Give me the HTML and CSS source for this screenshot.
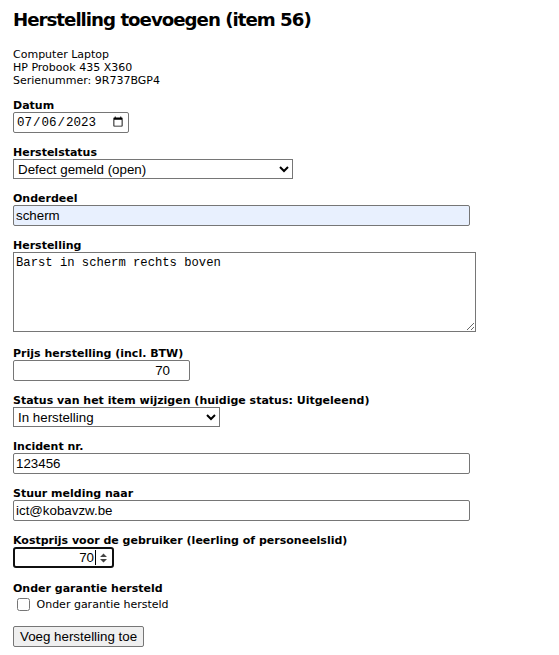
FILE: index.html
```html
<!DOCTYPE html>
<html lang="nl">
<head>
<meta charset="utf-8">
<title>Herstelling toevoegen</title>
<link rel="stylesheet" href="styles.css">
</head>
<body>
<div class="page">
  <h1 class="title">Herstelling toevoegen (item 56)</h1>
  <p class="info">Computer Laptop<br>HP Probook 435 X360<br>Serienummer: 9R737BGP4</p>
  <form class="form">
    <div class="field">
      <label class="lbl" for="datum">Datum</label>
      <input class="ctl date" id="datum" type="date" value="2023-07-06">
    </div>
    <div class="field">
      <label class="lbl" for="hs">Herstelstatus</label>
      <select class="ctl sel sel-wide" id="hs"><option>Defect gemeld (open)</option></select>
    </div>
    <div class="field">
      <label class="lbl" for="od">Onderdeel</label>
      <input class="ctl txt wide autofill" id="od" type="text" value="scherm">
    </div>
    <div class="field field-area">
      <label class="lbl" for="hst">Herstelling</label>
      <textarea class="area" id="hst">Barst in scherm rechts boven</textarea>
    </div>
    <div class="field">
      <label class="lbl" for="pr">Prijs herstelling (incl. BTW)</label>
      <input class="ctl txt price" id="pr" type="text" value="70">
    </div>
    <div class="field">
      <label class="lbl" for="st">Status van het item wijzigen (huidige status: Uitgeleend)</label>
      <select class="ctl sel sel-mid" id="st"><option>In herstelling</option></select>
    </div>
    <div class="field">
      <label class="lbl" for="inc">Incident nr.</label>
      <input class="ctl txt wide" id="inc" type="text" value="123456">
    </div>
    <div class="field">
      <label class="lbl" for="mail">Stuur melding naar</label>
      <input class="ctl txt wide" id="mail" type="text" value="ict@kobavzw.be">
    </div>
    <div class="field field-num">
      <span class="lbl">Kostprijs voor de gebruiker (leerling of personeelslid)</span>
      <div class="num">
        <span class="num-val">70</span><span class="caret"></span>
        <svg class="spin" width="9" height="12" viewBox="0 0 9 12"><path d="M4.5 1.5 L8 5 H1 Z M4.5 10.5 L8 7 H1 Z" fill="#444"/></svg>
      </div>
    </div>
    <div class="field field-check">
      <span class="lbl">Onder garantie hersteld</span>
      <label class="check"><input class="cb" type="checkbox"> Onder garantie hersteld</label>
    </div>
    <div class="actions">
      <button class="btn" type="button">Voeg herstelling toe</button>
    </div>
  </form>
</div>
</body>
</html>
```
FILE: styles.css
```css
html, body {
  margin: 0;
  padding: 0;
  background: #fff;
}
body {
  font-family: "DejaVu Sans", Verdana, sans-serif;
  font-size: 11px;
  color: #000;
}
.page {
  padding: 9px 13px 0 13px;
}
.title {
  margin: 0;
  font-size: 18.2px;
  line-height: 22px;
  font-weight: bold;
  letter-spacing: -1px;
}
.info {
  margin: 17px 0 13px 0;
  line-height: 13px;
  font-size: 11px;
}
.form {
  margin: 0;
}
.field {
  margin-bottom: 14px;
}
.field-area {
  margin-bottom: 16px;
}
.lbl {
  display: block;
  font-weight: bold;
  font-size: 11px;
  line-height: 12px;
}
.ctl {
  display: block;
  box-sizing: border-box;
  height: 21px;
  margin: 0;
  font-family: "Liberation Sans", Arial, sans-serif;
  font-size: 13.33px;
  color: #000;
}
.txt {
  border: 1px solid #767676;
  border-radius: 2px;
  padding: 1px 2px;
  background: #fff;
}
.wide {
  width: 457px;
}
.autofill {
  background: #e8f0fe;
}
.price {
  width: 177px;
  text-align: right;
  padding-right: 19px;
}
.date {
  width: 116px;
  border: 1px solid #767676;
  border-radius: 2px;
  padding: 1px 2px;
  font-family: "Liberation Mono", monospace;
  font-size: 12.5px;
  background: #fff;
}
.sel {
  height: 20px;
  padding: 0;
  border: 1px solid #767676;
  border-radius: 0;
  background: #fff;
}
.sel-wide {
  width: 280px;
}
.sel-mid {
  width: 207px;
}
.area {
  display: block;
  box-sizing: border-box;
  width: 463px;
  height: 80px;
  margin: 0;
  padding: 2px;
  border: 1px solid #767676;
  border-radius: 0;
  font-family: "Liberation Mono", monospace;
  font-size: 12.2px;
  line-height: 16px;
  color: #000;
  resize: both;
}
.field-num {
  margin-bottom: 15px;
}
.num {
  box-sizing: border-box;
  width: 101px;
  height: 21px;
  border: 2px solid #101010;
  border-radius: 3px;
  display: flex;
  align-items: center;
  justify-content: flex-end;
  padding-right: 4px;
  font-family: "Liberation Sans", Arial, sans-serif;
  font-size: 13.33px;
}
.num-val {
  line-height: 15px;
}
.caret {
  width: 1px;
  height: 15px;
  background: #000;
  margin-left: 1px;
  margin-right: 3px;
}
.spin {
  display: block;
}
.field-check {
  margin-bottom: 12px;
}
.check {
  display: block;
  font-size: 11px;
  line-height: 19px;
}
.cb {
  width: 13px;
  height: 13px;
  margin: 3px 3px 3px 4px;
  vertical-align: -3px;
}
.actions {
  margin: 0;
}
.btn {
  box-sizing: border-box;
  height: 21px;
  margin: 0;
  padding: 1px 6px;
  border: 1px solid #767676;
  border-radius: 2px;
  background: #efefef;
  font-family: "Liberation Sans", Arial, sans-serif;
  font-size: 13.33px;
  color: #000;
}
```
